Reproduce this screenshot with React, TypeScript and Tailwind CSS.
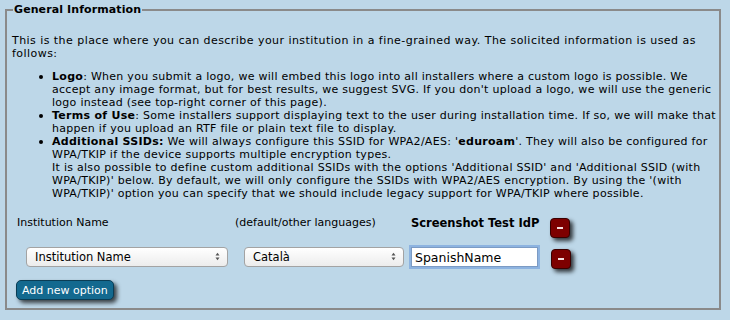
import { useState } from "react";

const LANGS = ["Català", "English", "Español", "Deutsch", "Français"];

function MinusButton() {
  return (
    <button
      type="button"
      className="flex h-[20px] w-[20px] items-center justify-center rounded-[4px] border border-[#3a0000] bg-[#7d0000] shadow-[3px_3px_4px_rgba(0,0,0,0.75)]"
    >
      <span className="block h-[2px] w-[6px] bg-[#f4dede]" />
    </button>
  );
}

function NiceSelect({ value, options, width }: { value: string; options: string[]; width: string }) {
  return (
    <div className={`relative h-[20px] ${width}`}>
      <select
        defaultValue={value}
        className="h-full w-full appearance-none rounded-[4px] border border-[#a3a3a3] bg-gradient-to-b from-white to-[#ececec] pl-[8px] text-[11.5px] leading-[18px] text-black outline-none"
      >
        {options.map((o) => (
          <option key={o}>{o}</option>
        ))}
      </select>
      <svg
        className="pointer-events-none absolute right-[8px] top-[5px]"
        width="5"
        height="9"
        viewBox="0 0 5 9"
      >
        <path d="M0.5 3.5 L2.5 0.8 L4.5 3.5 Z" fill="#555" />
        <path d="M0.5 5.5 L2.5 8.2 L4.5 5.5 Z" fill="#555" />
      </svg>
    </div>
  );
}

function Bullet({ children }: { children: React.ReactNode }) {
  return (
    <li className="relative pl-[14px]">
      <span className="absolute left-[1px] top-[5px] h-[4px] w-[4px] rounded-full bg-black" />
      {children}
    </li>
  );
}

export default function App() {
  const [name, setName] = useState("SpanishName");

  return (
    <div
      className="h-[320px] w-[730px] overflow-hidden bg-[#bdd7e8] pt-[3px] text-[11px] leading-[13px] text-black"
      style={{ fontFamily: '"DejaVu Sans", Verdana, sans-serif' }}
    >
      <fieldset className="ml-[5px] h-[307px] w-[716px] border-2 border-[#8a8a8a] pb-0 pl-[5px] pr-0 pt-[9px]">
        <legend className="ml-[1px] px-[1px] text-[11px] font-bold leading-[14px] tracking-[0.1px]">
          General Information
        </legend>

        <p className="mt-[8px] tracking-[0.45px]">
          This is the place where you can describe your institution in a fine-grained way. The solicited
          information is used as follows:
        </p>

        {/* line breaks follow the original page */}
        <ul className="ml-[26px] mt-[10px] list-none whitespace-nowrap tracking-[0.28px]">
          <Bullet>
            <b>Logo</b>: When you submit a logo, we will embed this logo into all installers where a custom logo
            is possible. We
            <br />
            accept any image format, but for best results, we suggest SVG. If you don't upload a logo, we will
            use the generic
            <br />
            logo instead (see top-right corner of this page).
          </Bullet>
          <Bullet>
            <b>Terms of Use</b>: Some installers support displaying text to the user during installation time.
            If so, we will make that
            <br />
            happen if you upload an RTF file or plain text file to display.
          </Bullet>
          <Bullet>
            <b>Additional SSIDs:</b> We will always configure this SSID for WPA2/AES: '<b>eduroam</b>'. They will
            also be configured for
            <br />
            WPA/TKIP if the device supports multiple encryption types.
            <br />
            It is also possible to define custom additional SSIDs with the options 'Additional SSID' and
            'Additional SSID (with
            <br />
            WPA/TKIP)' below. By default, we will only configure the SSIDs with WPA2/AES encryption. By using the
            '(with
            <br />
            WPA/TKIP)' option you can specify that we should include legacy support for WPA/TKIP where possible.
          </Bullet>
        </ul>

        <div className="mt-[16px] grid grid-cols-[221px_176px_139px_auto] items-start">
          <div className="pl-[5px] text-[11px] leading-[14px]">Institution Name</div>
          <div className="pl-[2px] text-[11px] leading-[14px]">(default/other languages)</div>
          <div className="pl-[2px] text-[11.5px] font-bold leading-[14px]">Screenshot Test IdP</div>
          <div className="pl-[2px] pt-[2px]">
            <MinusButton />
          </div>

          <div className="mt-[9px] pl-[14px]">
            <NiceSelect value="Institution Name" options={["Institution Name", "Description"]} width="w-[202px]" />
          </div>
          <div className="mt-[9px] pl-[11px]">
            <NiceSelect value="Català" options={LANGS} width="w-[160px]" />
          </div>
          <div className="mt-[9px] pl-[2px]">
            <input
              value={name}
              onChange={(e) => setName(e.target.value)}
              className="h-[20px] w-[127px] border border-[#7c9bc4] bg-white px-[3px] text-[12.5px] text-black shadow-[0_0_0_2px_#8db3e0] outline-none"
            />
          </div>
          <div className="mt-[11px] pl-[3px]">
            <MinusButton />
          </div>
        </div>

        <button
          type="button"
          className="mt-[11px] ml-[4px] h-[20px] rounded-[5px] border border-[#0a3d55] bg-[#13698f] px-[5px] text-[11px] leading-[17px] text-white shadow-[3px_3px_4px_rgba(0,0,0,0.7)]"
        >
          Add new option
        </button>
      </fieldset>
    </div>
  );
}
